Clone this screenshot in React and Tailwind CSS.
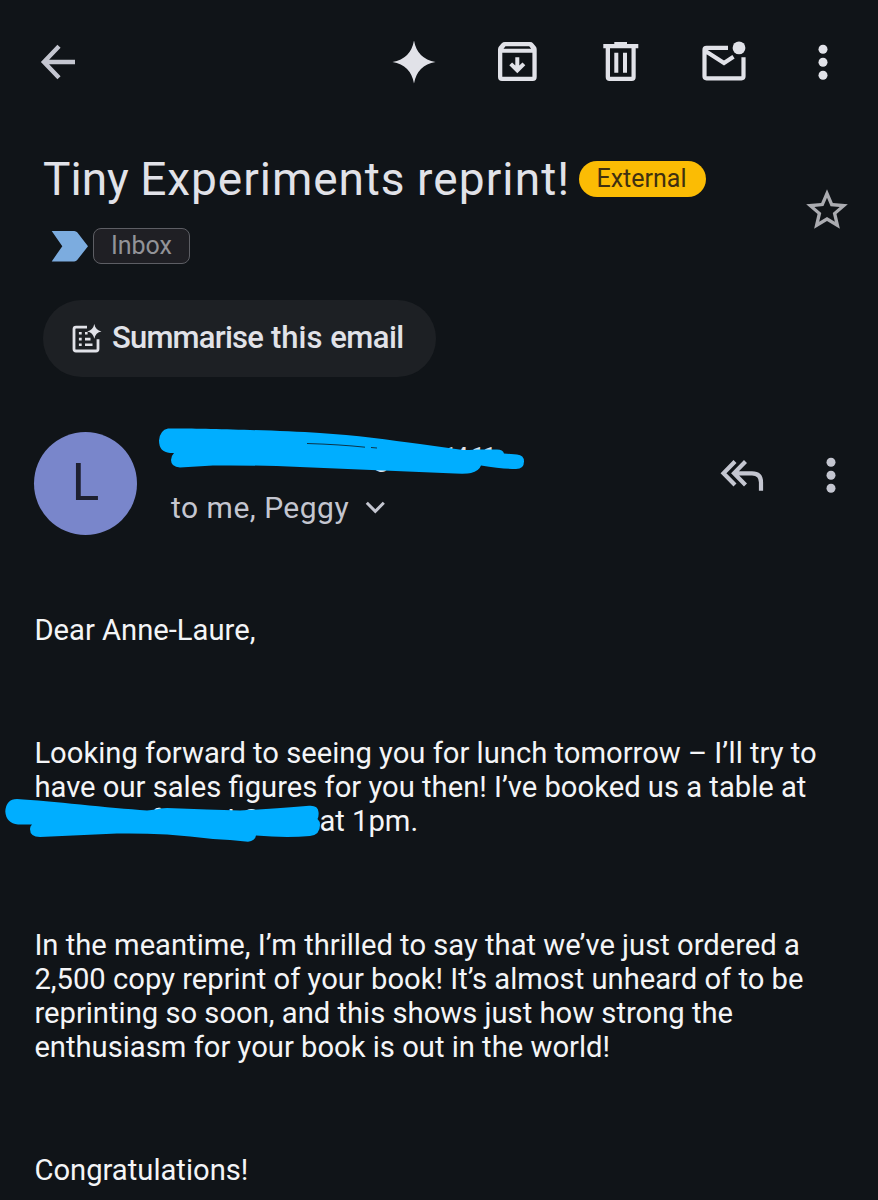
import React from "react";

const paragraphClass = "text-[29.2px] leading-[34px] text-[#f4f5f7] whitespace-nowrap";

const MoreIcon = ({ className }) => (
  <svg className={className} viewBox="0 0 10 36" fill="currentColor">
    <circle cx="5" cy="5.3" r="4.5" />
    <circle cx="5" cy="18.3" r="4.5" />
    <circle cx="5" cy="31.3" r="4.5" />
  </svg>
);

const Toolbar = () => (
  <div className="flex h-[124px] shrink-0 items-center pl-[40px] pr-[50px] text-[#e1e2e8]">
    <svg
      className="h-[36px] w-[36px] text-[#c4c6d0]"
      viewBox="40 44 36 36"
      fill="none"
      stroke="currentColor"
      strokeWidth="4.4"
    >
      <path d="M59 46.2 43.9 62 59 77.8M45 62h30" />
    </svg>
    <svg className="ml-[316px] h-[44px] w-[44px]" viewBox="-22 -22 44 44" fill="currentColor">
      <path d="M0-21.5Q3.2-3.2 21.5 0Q3.2 3.2 0 21.5Q-3.2 3.2-21.5 0Q-3.2-3.2 0-21.5Z" />
    </svg>
    <svg className="ml-[61px] h-[40px] w-[40px]" viewBox="497 42 40 40" fill="currentColor">
      <path
        fillRule="evenodd"
        d="M505 42h25q2 0 3.200 1.400l2.500 3q1 1.200 1 3V77q0 4-4 4h-30.700q-4 0-4-4V49.400q0-1.800 1-3l2.500-3Q503 42 505 42ZM505.500 46.300 503.500 48.700h27.700l-2-2.400ZM502.300 52.700v24h30.100v-24Z"
      />
      <path d="M515.300 57.300h4v8.300l3.200-3.200 2.800 2.800-8 8-8-8 2.800-2.800 3.200 3.200Z" />
    </svg>
    <svg className="ml-[66px] h-[40px] w-[36px]" viewBox="603 42 36 40" fill="currentColor">
      <path
        fillRule="evenodd"
        d="M614.300 42h12.700v2h11.300v4.300h-2.600V77q0 4-4 4h-22q-4 0-4-4V48.300h-2.400V44h11ZM610 48.300v28.400h21.500V48.300Z"
      />
      <path d="M614.300 52.700h4v20h-4ZM623 52.700h4v20h-4Z" />
    </svg>
    <svg className="ml-[63px] h-[44px] w-[44px]" viewBox="702 38.500 44 44">
      <path
        fill="none"
        stroke="currentColor"
        strokeWidth="4.200"
        d="M728 46.400h-21.500q-2 0-2 2v26.400q0 2 2 2h35q2 0 2-2V55.800M705 49.300l19 12.200 9.500-6.200"
      />
      <circle cx="739" cy="46.400" r="6.400" fill="currentColor" />
    </svg>
    <MoreIcon className="ml-[72px] h-[36px] w-[10px]" />
  </div>
);

const Subject = () => (
  <div className="flex h-[176px] shrink-0">
    <div className="w-[800px] pl-[43px] pt-[31px]">
      <div className="flex h-[48px] items-center">
        <h1 className="w-[536px] whitespace-nowrap text-[46px] leading-[48px] text-[#e1e2e8]">
          Tiny <span className="tracking-[0.95px]">Experiments</span>{" "}
          <span className="tracking-[1.1px]">reprint!</span>
        </h1>
        <span className="flex h-[36px] w-[127px] items-center justify-center rounded-full bg-[#fbbc04] pr-[2px] text-[25px] text-[#3f3010]">
          External
        </span>
      </div>
      <div className="mt-[25px] flex items-center pl-[8px]">
        <svg className="h-[32px] w-[38px]" viewBox="51 229 38 32">
          <path
            fill="#7cacdf"
            d="M51.700 230h22.500q2 0 3.200 1.600l10.600 13.600-10.600 13.600q-1.200 1.600-3.200 1.600H51.700l10.600-15.200Z"
          />
        </svg>
        <span className="ml-[4px] flex h-[36px] w-[97px] items-center justify-center rounded-lg border border-[#5d5e64] bg-[#1f1f24] text-[25px] text-[#929398]">
          Inbox
        </span>
      </div>
    </div>
    <svg className="ml-[2px] mt-[61px] h-[50px] w-[50px] text-[#abacb1]" viewBox="0 0 24 24" fill="currentColor">
      <path d="M22 9.240l-7.190-.62L12 2 9.190 8.630 2 9.240l5.460 4.730L5.820 21 12 17.270 18.180 21l-1.630-7.030L22 9.240zM12 15.400l-3.760 2.270 1-4.280-3.320-2.880 4.380-.38L12 6.100l1.710 4.040 4.380.38-3.320 2.880 1 4.280L12 15.400z" />
    </svg>
  </div>
);

const SummariseButton = () => (
  <button className="ml-[43px] flex h-[77px] w-[393px] shrink-0 items-center rounded-full bg-[#1d2024] pl-[29px] text-[#e1e2e8]">
    <svg className="h-[30px] w-[30px]" viewBox="72 323.200 30 30" fill="currentColor">
      <path
        fill="none"
        stroke="currentColor"
        strokeWidth="2.800"
        d="M87 326.300h-11q-2 0-2 2v19.900q0 2 2 2h20q2 0 2-2V338.500"
      />
      <path d="M94.300 323.300q1.200 6.200 7.200 7.300-6 1.100-7.200 7.300-1.200-6.200-7.200-7.300 6-1.100 7.200-7.300Z" />
      <path d="M78.900 331.200h2.800v2.600h-2.800ZM78.900 337h2.800v2.600h-2.800ZM78.900 342.600h2.800v2.600h-2.800ZM85 331.200h2.600v2.600h-2.600ZM85 337h5.500v2.600h-5.500ZM85 342.600h7.500v2.600h-7.500Z" />
    </svg>
    <span className="ml-[10px] flex gap-[8px] whitespace-nowrap text-[31px] font-medium">
      <span className="tracking-[-0.8px]">Summarise</span>
      <span>this</span>
      <span className="tracking-[-0.6px]">email</span>
    </span>
  </button>
);

const Sender = () => (
  <div className="relative flex h-[236px] shrink-0 pt-[55px]">
    <div className="ml-[34px] flex h-[103px] w-[103px] items-center justify-center rounded-full bg-[#7986cb] text-[51px] text-[#1e2030]">
      L
    </div>
    <div className="ml-[34px] w-[540px]">
      <div className="flex h-[50px] text-[#e1e2e8]">
        <span className="ml-[202px] mt-[4px] w-[71px] text-[31px] leading-[40px]">g</span>
        <span className="mt-[11px] text-[22px] font-medium leading-[26px] tracking-[-1px]">14:11</span>
      </div>
      <div className="flex h-[50px] items-center text-[#c4c6d0]">
        <span className="w-[194px] whitespace-nowrap text-[30px] tracking-[0.5px]">to me, Peggy</span>
        <svg className="h-[14px] w-[20px]" viewBox="365 501 20 14" fill="none" stroke="currentColor" strokeWidth="3">
          <path d="M366.800 503.800 375.300 512.300 383.800 503.800" />
        </svg>
      </div>
    </div>
    <svg
      className="ml-[9px] mt-[27px] h-[34px] w-[44px] text-[#c4c6d0]"
      viewBox="720 459 44 34"
      fill="none"
      stroke="currentColor"
      strokeWidth="4.200"
    >
      <path d="M735 461.500 723.500 473.300 735 485M745.500 461.500 734 473.300 745.500 485M735 473.300h17q9 0 9 9v8.500" />
    </svg>
    <MoreIcon className="ml-[62px] mt-[25px] h-[36px] w-[10px] text-[#c4c6d0]" />
    {/* marker strokes over the sender name */}
    <svg className="absolute left-[155px] top-[45px] h-[60px] w-[375px]" viewBox="155 422 375 60">
      <path
        fill="#00aeff"
        d="M168 428.500C190 428 270 430 320 433C355 435 390 440 420 444L463 450Q469 450 477 449.500H497Q503 449.500 504 453.500L517 454.500Q524 455 524 461.500Q524 469 516 469Q502 469 481 465.500Q479 471 471 473Q467 474 455 473.500L300 467Q255 465 213 465.500L180 467.500Q171 467 171 460Q171 456 174 453H170Q159 452 159 440.500Q160 430 168 428.500Z"
      />
      <path d="M307 443.500Q340 444.500 365 447.200M371 447.500l6 .5" fill="none" stroke="#101418" strokeWidth="0.8" />
    </svg>
  </div>
);

const Body = () => (
  <div className="relative flex flex-col gap-[89.4px] pl-[34.4px]">
    <p className={paragraphClass}>Dear Anne-Laure,</p>
    <div className={paragraphClass}>
      <p>Looking forward to seeing you for lunch tomorrow – I’ll try to</p>
      <p>have our sales figures for you then! I’ve booked us a table at</p>
      <p className="flex">
        <span className="-mt-px ml-[116px] w-[77px]">f</span>
        <span className="w-[15px]">l</span>
        <span className="-mt-px w-[77px]">S</span>
        <span>at 1pm.</span>
      </p>
    </div>
    <div className={paragraphClass}>
      <p>In the meantime, I’m thrilled to say that we’ve just ordered a</p>
      <p>2,500 copy reprint of your book! It’s almost unheard of to be</p>
      <p>reprinting so soon, and this shows just how strong the</p>
      <p>enthusiasm for your book is out in the world!</p>
    </div>
    <p className={paragraphClass}>Congratulations!</p>
    {/* marker strokes over the restaurant name */}
    <svg className="absolute left-0 top-[182px] h-[50px] w-[325px]" viewBox="0 795 325 50">
      <path
        fill="#00aeff"
        d="M17 799C50 801 110 808 147 810.500Q157 809.500 160 808.500L167 808L207 809.500L240 810.500C270 809 290 807 309 805.700Q318 805 318.500 812Q319 816 317.500 819Q320 821 320 825Q320 835 310 836Q285 838 256 835.500Q255 841 248 841.800L230 840L213 839Q190 836 167 834.500Q140 833 117 833.500L40 837Q30 837 30 829Q30 826 32 824.500H18Q6 823 5.300 811.500Q6 799 17 799Z"
      />
    </svg>
  </div>
);

const App = () => {
  return (
    <div className="flex h-[1200px] w-[878px] flex-col overflow-hidden bg-[#101418] font-['Roboto',sans-serif]">
      <Toolbar />
      <Subject />
      <SummariseButton />
      <Sender />
      <Body />
    </div>
  );
};

export default App;
